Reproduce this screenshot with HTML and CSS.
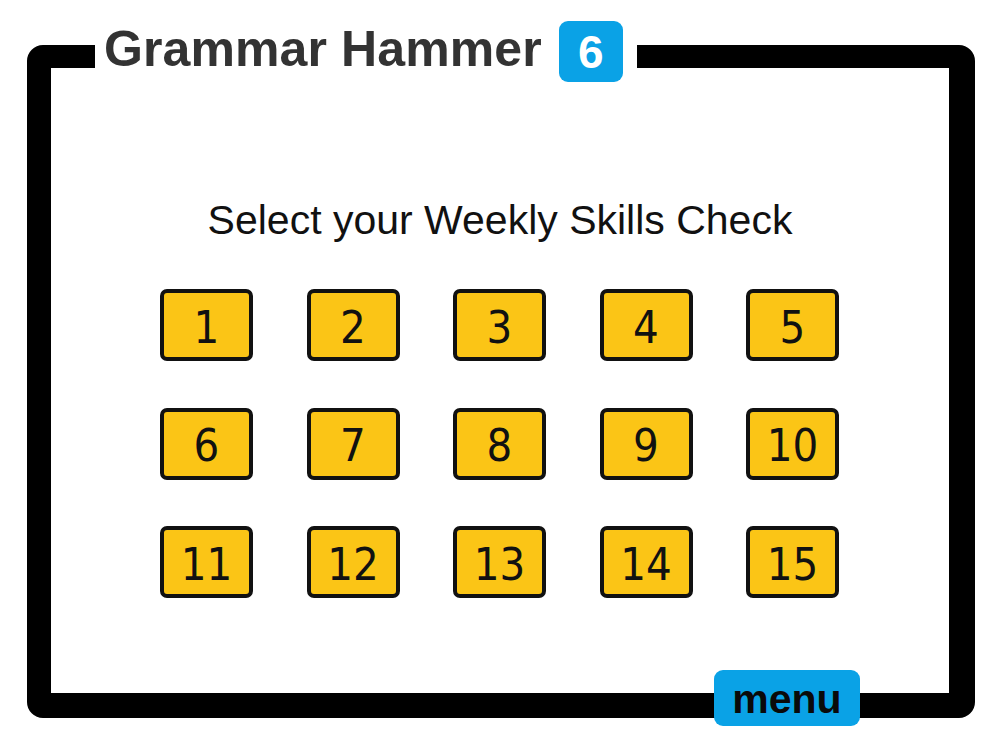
FILE: index.html
```html
<!DOCTYPE html>
<html>
<head>
<meta charset="utf-8">
<link rel="stylesheet" href="styles.css">
</head>
<body>
<div class="frame">
  <div class="title">
    <span class="title-text">Grammar Hammer</span>
    <span class="badge">6</span>
  </div>
  <h1 class="heading">Select your Weekly Skills Check</h1>
  <div class="grid">
    <div class="check">1</div>
    <div class="check">2</div>
    <div class="check">3</div>
    <div class="check">4</div>
    <div class="check">5</div>
    <div class="check">6</div>
    <div class="check">7</div>
    <div class="check">8</div>
    <div class="check">9</div>
    <div class="check">10</div>
    <div class="check">11</div>
    <div class="check">12</div>
    <div class="check">13</div>
    <div class="check">14</div>
    <div class="check">15</div>
  </div>
  <div class="menu">menu</div>
</div>
</body>
</html>
```
FILE: styles.css
```css
html, body {
  margin: 0;
  padding: 0;
  background: #ffffff;
}
body {
  width: 1000px;
  height: 750px;
  overflow: hidden;
  font-family: "Liberation Sans", Arial, sans-serif;
}
.frame {
  position: relative;
  box-sizing: border-box;
  margin: 45px 0 0 27px;
  width: 948px;
  height: 673px;
  border: 24px solid #000;
  border-top-width: 23px;
  border-right-width: 26px;
  border-bottom-width: 25px;
  border-radius: 16px;
  padding-top: 128px;
}
.title {
  position: absolute;
  left: 44px;
  top: -47px;
  height: 61px;
  display: flex;
  align-items: center;
  gap: 17px;
  padding: 0 14px 0 9px;
  background: #fff;
}
.title-text {
  font-size: 50px;
  line-height: 1;
  font-weight: bold;
  color: #333333;
  padding-bottom: 6px;
  letter-spacing: 0.1px;
}
.badge {
  width: 64px;
  height: 61px;
  border-radius: 9px;
  background: #0aa2e6;
  color: #fff;
  font-size: 46px;
  font-weight: bold;
  display: flex;
  align-items: center;
  justify-content: center;
  line-height: 1;
}
.heading {
  margin: 0;
  font-size: 41px;
  line-height: 48px;
  font-weight: normal;
  text-align: center;
  color: #111;
}
.grid {
  display: grid;
  grid-template-columns: repeat(5, 93px);
  grid-auto-rows: 72px;
  column-gap: 53.5px;
  row-gap: 46.5px;
  margin: 45px 0 0 109px;
}
.check {
  box-sizing: border-box;
  border: 4px solid #111;
  border-radius: 7px;
  background: #fbc516;
  display: flex;
  align-items: center;
  justify-content: center;
  font-family: "DejaVu Sans Condensed", "DejaVu Sans", sans-serif;
  font-size: 45px;
  line-height: 1;
  color: #111;
  padding-top: 4px;
}
.menu {
  position: absolute;
  right: 89px;
  bottom: -33px;
  width: 146px;
  height: 56px;
  border-radius: 9px;
  background: #0aa2e6;
  color: #0a0a0a;
  font-size: 41px;
  font-weight: bold;
  display: flex;
  align-items: center;
  justify-content: center;
  line-height: 1;
  padding-top: 2px;
  box-sizing: border-box;
}
```
